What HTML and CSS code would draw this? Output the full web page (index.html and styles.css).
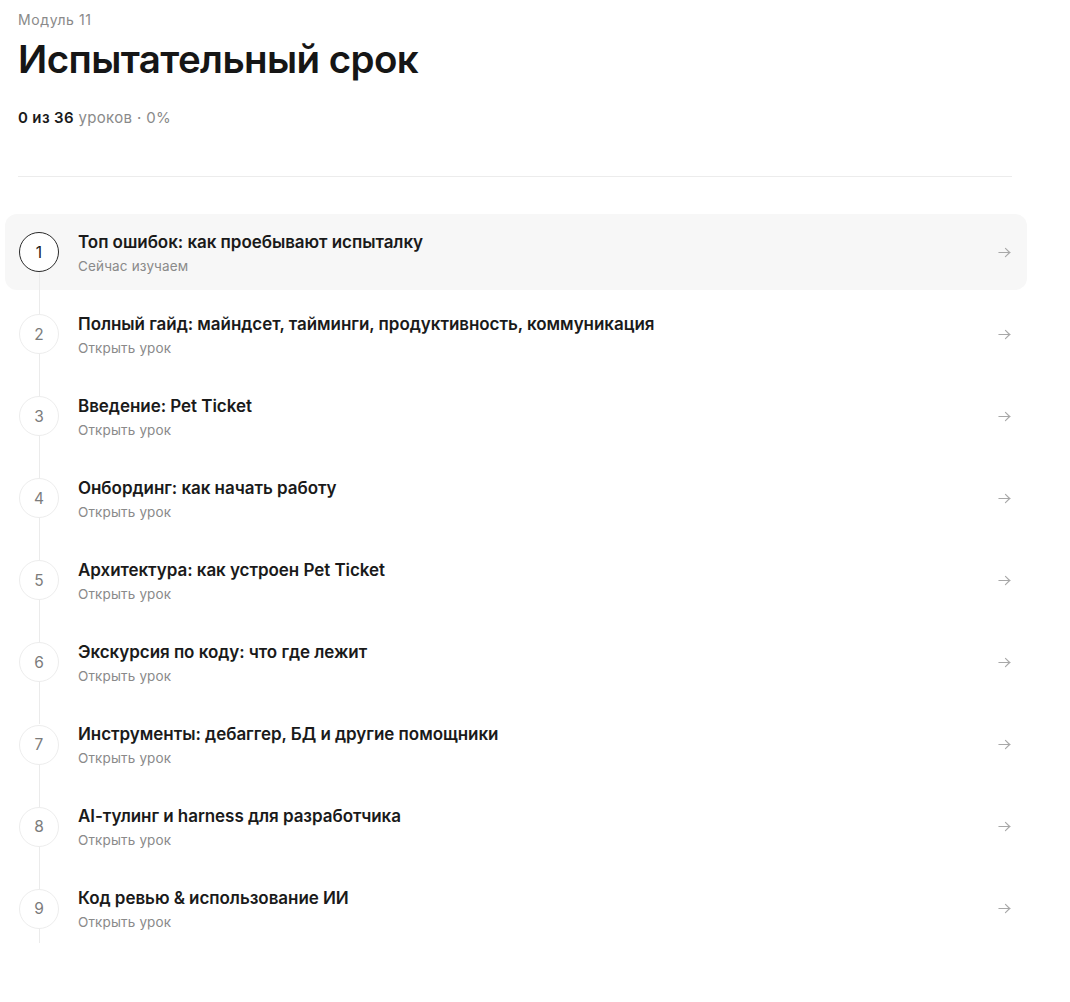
FILE: index.html
```html
<!DOCTYPE html>
<html lang="ru">
<head>
<meta charset="utf-8">
<link rel="stylesheet" href="styles.css">
</head>
<body>
<main class="page">
  <div class="eyebrow">Модуль 11</div>
  <h1 class="title">Испытательный срок</h1>
  <div class="progress"><b>0 из 36</b> уроков · 0%</div>
  <hr class="divider">
  <ol class="lessons">
    <li class="lesson active"><span class="num">1</span><div class="text"><div class="name">Топ ошибок: как проебывают испыталку</div><div class="sub">Сейчас изучаем</div></div><svg class="arrow" viewBox="0 0 16 16"><path d="M2 8h12M9 3.5l4.5 4.5L9 12.5"/></svg></li>
    <li class="lesson"><span class="num">2</span><div class="text"><div class="name">Полный гайд: майндсет, тайминги, продуктивность, коммуникация</div><div class="sub">Открыть урок</div></div><svg class="arrow" viewBox="0 0 16 16"><path d="M2 8h12M9 3.5l4.5 4.5L9 12.5"/></svg></li>
    <li class="lesson"><span class="num">3</span><div class="text"><div class="name">Введение: Pet Ticket</div><div class="sub">Открыть урок</div></div><svg class="arrow" viewBox="0 0 16 16"><path d="M2 8h12M9 3.5l4.5 4.5L9 12.5"/></svg></li>
    <li class="lesson"><span class="num">4</span><div class="text"><div class="name">Онбординг: как начать работу</div><div class="sub">Открыть урок</div></div><svg class="arrow" viewBox="0 0 16 16"><path d="M2 8h12M9 3.5l4.5 4.5L9 12.5"/></svg></li>
    <li class="lesson"><span class="num">5</span><div class="text"><div class="name">Архитектура: как устроен Pet Ticket</div><div class="sub">Открыть урок</div></div><svg class="arrow" viewBox="0 0 16 16"><path d="M2 8h12M9 3.5l4.5 4.5L9 12.5"/></svg></li>
    <li class="lesson"><span class="num">6</span><div class="text"><div class="name">Экскурсия по коду: что где лежит</div><div class="sub">Открыть урок</div></div><svg class="arrow" viewBox="0 0 16 16"><path d="M2 8h12M9 3.5l4.5 4.5L9 12.5"/></svg></li>
    <li class="lesson"><span class="num">7</span><div class="text"><div class="name">Инструменты: дебаггер, БД и другие помощники</div><div class="sub">Открыть урок</div></div><svg class="arrow" viewBox="0 0 16 16"><path d="M2 8h12M9 3.5l4.5 4.5L9 12.5"/></svg></li>
    <li class="lesson"><span class="num">8</span><div class="text"><div class="name">AI-тулинг и harness для разработчика</div><div class="sub">Открыть урок</div></div><svg class="arrow" viewBox="0 0 16 16"><path d="M2 8h12M9 3.5l4.5 4.5L9 12.5"/></svg></li>
    <li class="lesson"><span class="num">9</span><div class="text"><div class="name">Код ревью &amp; использование ИИ</div><div class="sub">Открыть урок</div></div><svg class="arrow" viewBox="0 0 16 16"><path d="M2 8h12M9 3.5l4.5 4.5L9 12.5"/></svg></li>
  </ol>
</main>
</body>
</html>
```
FILE: styles.css
```css
* { box-sizing: border-box; }
html, body { margin: 0; background: #fff; }
body {
  font-family: Inter, "Noto Sans", "Liberation Sans", sans-serif;
  color: #1a1a1a;
  -webkit-font-smoothing: antialiased;
}
.page {
  width: 994px;
  margin-left: 18px;
  padding-top: 12px;
}
.eyebrow {
  font-size: 14px;
  line-height: 16px;
  letter-spacing: 0.6px;
  color: #8a8a8a;
}
.title {
  margin: 9px 0 0;
  font-size: 38.5px;
  line-height: 44px;
  font-weight: 600;
  letter-spacing: -0.6px;
  color: #161616;
}
.progress {
  margin-top: 27px;
  font-size: 15px;
  line-height: 20px;
  letter-spacing: 0.35px;
  color: #8a8a8a;
}
.progress b {
  font-weight: 600;
  color: #1a1a1a;
}
.divider {
  margin: 48px 0 0;
  border: 0;
  border-top: 1px solid #ececec;
}
.lessons {
  list-style: none;
  margin: 37px -15px 0 -13px;
  padding: 0;
  display: flex;
  flex-direction: column;
  gap: 6.1px;
}
.lesson {
  position: relative;
  display: flex;
  align-items: center;
  height: 76px;
  padding: 0 15px 0 14px;
  border-radius: 12px;
}
.lesson::after {
  content: "";
  position: absolute;
  left: 33.5px;
  top: 58px;
  width: 1px;
  height: 42px;
  background: #ebebeb;
}
.lesson:last-child::after { height: 14px; }
.lesson.active { background: #f7f7f7; }
.num {
  flex: none;
  width: 40px;
  height: 40px;
  border-radius: 50%;
  border: 1px solid #ededed;
  background: #fff;
  display: flex;
  align-items: center;
  justify-content: center;
  font-size: 15.5px;
  color: #7c7c7c;
}
.active .num {
  border: 1.6px solid #2a2a2a;
  color: #1a1a1a;
  background: #fff;
}
.text {
  flex: 1;
  margin-left: 19px;
  padding-top: 1px;
}
.name {
  font-size: 17px;
  line-height: 22px;
  font-weight: 600;
  letter-spacing: -0.05px;
  color: #1a1a1a;
}
.sub {
  margin-top: 5px;
  font-size: 13.5px;
  line-height: 17px;
  letter-spacing: 0.15px;
  color: #8a8a8a;
}
.arrow {
  flex: none;
  width: 15px;
  height: 15px;
  fill: none;
  stroke: #a8a8a8;
  stroke-width: 1.2;
  stroke-linecap: round;
  stroke-linejoin: round;
}
```
